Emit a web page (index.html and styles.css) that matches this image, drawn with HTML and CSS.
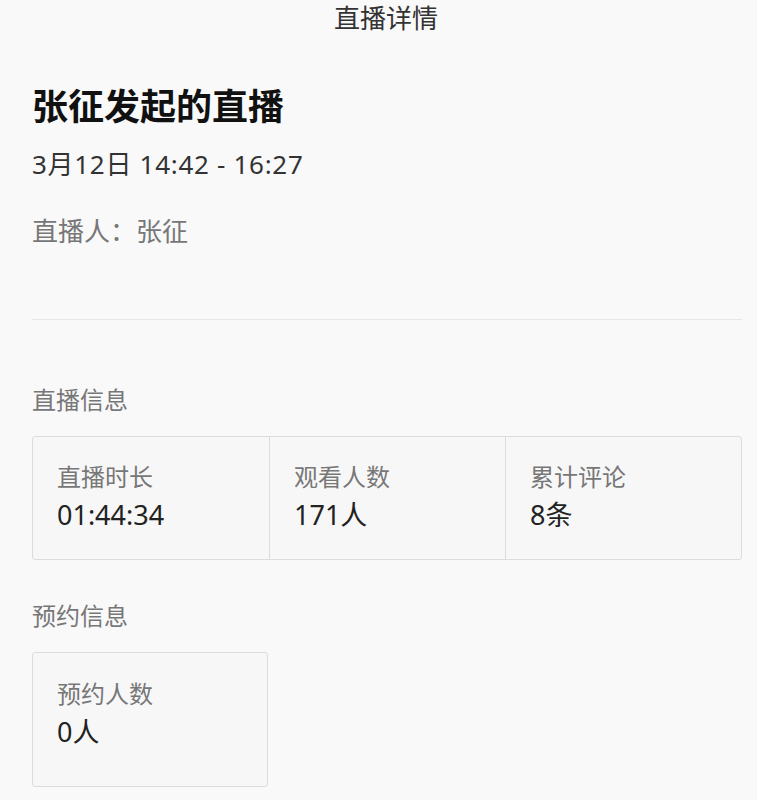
FILE: index.html
```html
<!DOCTYPE html>
<html lang="zh-CN">
<head>
  <meta charset="UTF-8">
  <meta name="viewport" content="width=device-width, initial-scale=1">
  <title>直播详情</title>
  <link rel="stylesheet" href="styles.css">
</head>
<body>

  <div class="topbar">直播详情</div>

  <div class="live-detail">
    <div class="live-head">
      <h1>张征发起的直播</h1>
      <p class="live-time">3月12日 14:42 - 16:27</p>
      <p class="live-host">直播人：张征</p>
    </div>

    <!-- 直播信息 -->
    <h3 class="section-title">直播信息</h3>
    <div class="stat-box">
      <div class="stat-item">
        <div class="stat-label">直播时长</div>
        <div class="stat-value">01:44:34</div>
      </div>
      <div class="stat-item">
        <div class="stat-label">观看人数</div>
        <div class="stat-value">171人</div>
      </div>
      <div class="stat-item">
        <div class="stat-label">累计评论</div>
        <div class="stat-value">8条</div>
      </div>
    </div>

    <!-- 预约信息 -->
    <h3 class="section-title">预约信息</h3>
    <div class="stat-box stat-box-single">
      <div class="stat-item">
        <div class="stat-label">预约人数</div>
        <div class="stat-value">0人</div>
      </div>
    </div>
  </div>

</body>
</html>
```

FILE: styles.css
```css
body {
  margin: 0;
  background-color: #f9f9f9;
  font-family: 'Noto Sans', 'Noto Sans CJK SC', sans-serif;
  color: #222;
}

.topbar {
  height: 36px;
  line-height: 36px;
  padding-left: 15px;
  text-align: center;
  font-size: 26px;
  color: #333;
}

.live-detail {
  padding: 0 15px 0 32px;
}

.live-head {
  padding-top: 46px;
  padding-bottom: 70px;
  border-bottom: 1px solid #e6e6e6;
}

h1 {
  margin: 0;
  font-size: 36px;
  line-height: 50px;
  font-weight: bold;
  color: #111;
}

.live-time {
  margin: 14px 0 0;
  font-size: 26px;
  line-height: 36px;
  letter-spacing: 0.7px;
  color: #333;
}

.live-host {
  margin: 31px 0 0;
  font-size: 26px;
  line-height: 36px;
  color: #777;
}

.section-title {
  margin: 62px 0 18px;
  font-size: 24px;
  line-height: 36px;
  font-weight: normal;
  color: #777;
}

.stat-box + .section-title {
  margin-top: 38px;
}

.stat-box {
  display: grid;
  grid-template-columns: repeat(3, 1fr);
  border: 1px solid #dcdcdc;
  border-radius: 3px;
  background-color: #f7f7f7;
}

.stat-box-single {
  width: 234px;
  grid-template-columns: 1fr;
}

.stat-item {
  padding: 22px 24px 26px;
  border-left: 1px solid #dcdcdc;
}

.stat-item:first-child {
  border-left: none;
}

.stat-box-single .stat-item {
  padding-top: 23px;
  padding-bottom: 36px;
}

.stat-label {
  font-size: 24px;
  line-height: 36px;
  color: #777;
}

.stat-value {
  margin-top: 2px;
  font-size: 27px;
  line-height: 36px;
  color: #222;
}
```
